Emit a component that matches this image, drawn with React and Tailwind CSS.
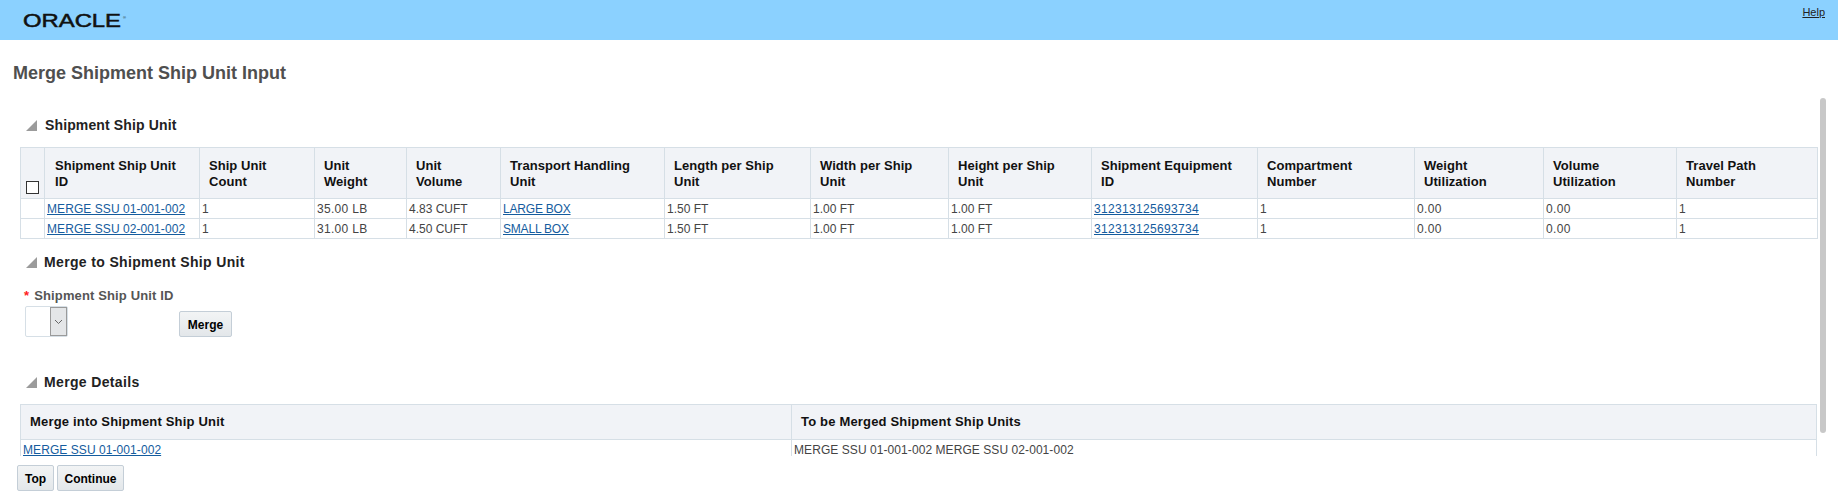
const F = { fontFamily: '"Liberation Sans", Arial, sans-serif' };

function Triangle() {
  return (
    <svg width="11" height="11" viewBox="0 0 11 11" className="shrink-0">
      <polygon points="11,0 11,11 0,11" fill="#9b9b9b" />
    </svg>
  );
}

function Section({ title, className }) {
  return (
    <div className={`flex items-center gap-[7px] pl-[26px] text-[14px] leading-[16px] font-bold text-[#222222] ${className}`}>
      <Triangle />
      <span>{title}</span>
    </div>
  );
}

function Btn({ children, className = "" }) {
  return (
    <button className={`h-[26px] rounded-[2px] border border-[#c4ced7] bg-gradient-to-b from-[#f2f4f5] to-[#e3e7ea] pt-[1px] text-[12px] font-bold text-black ${className}`}>
      {children}
    </button>
  );
}

const cols = [24, 155, 115, 92, 94, 164, 146, 138, 143, 166, 157, 129, 133, 141];
const heads = [
  ["Shipment Ship Unit", "ID"], ["Ship Unit", "Count"], ["Unit", "Weight"], ["Unit", "Volume"], ["Transport Handling", "Unit"],
  ["Length per Ship", "Unit"], ["Width per Ship", "Unit"], ["Height per Ship", "Unit"], ["Shipment Equipment", "ID"],
  ["Compartment", "Number"], ["Weight", "Utilization"], ["Volume", "Utilization"], ["Travel Path", "Number"],
];
const N = "tracking-[0.32px]";
const C = "tracking-[-0.2px]";
const M = "tracking-[0.07px]";
const rows = [
  [["MERGE SSU 01-001-002", M], ["1", N], ["35.00 LB", "tracking-[0.3px]"], ["4.83 CUFT", ""], ["LARGE BOX", C], ["1.50 FT", ""], ["1.00 FT", ""], ["1.00 FT", ""], ["312313125693734", N], ["1", N], ["0.00", N], ["0.00", N], ["1", N]],
  [["MERGE SSU 02-001-002", M], ["1", N], ["31.00 LB", "tracking-[0.3px]"], ["4.50 CUFT", ""], ["SMALL BOX", C], ["1.50 FT", ""], ["1.00 FT", ""], ["1.00 FT", ""], ["312313125693734", N], ["1", N], ["0.00", N], ["0.00", N], ["1", N]],
];
const linkCols = [0, 4, 8];
const link = "text-[#145c9e] underline";

export default function App() {
  return (
    <div className="relative h-[503px] w-[1838px] overflow-hidden bg-white" style={F}>
      <header className="flex h-[40px] items-start justify-between bg-[#8bd1ff] pl-[21px] pr-[13px]">
        <svg width="110" height="22" viewBox="0 0 110 22" className="mt-[12px]">
          <text x="2" y="15" textLength="98" lengthAdjust="spacingAndGlyphs" fontFamily="Liberation Sans" fontSize="18" fill="#111" stroke="#111" strokeWidth="0.5">ORACLE</text>
          <text x="102" y="7" fontFamily="Liberation Sans" fontSize="4" fill="#111">®</text>
        </svg>
        <a className="mt-[5px] text-[11px] leading-[14px] text-[#222] underline">Help</a>
      </header>

      <h1 className="mt-[23px] pl-[13px] text-[18px] leading-[20px] font-bold text-[#4f4f4f]">Merge Shipment Ship Unit Input</h1>

      <main className="h-[373px] overflow-hidden">
        <Section title="Shipment Ship Unit" className="mt-[34px] tracking-[0.13px] [&>span]:ml-[1px]" />
        <table className="mt-[14px] ml-[20px] w-[1797px] table-fixed border-collapse">
          <colgroup>
            {cols.map((w, i) => <col key={i} style={{ width: w }} />)}
          </colgroup>
          <thead>
            <tr className="h-[51px] bg-[#f1f3f7]">
              <th className="border border-[#d6dfe6] pb-[4px] pl-[5px] text-left align-bottom">
                <span className="block h-[13px] w-[13px] border border-[#333] bg-white"></span>
              </th>
              {heads.map((h, i) => (
                <th key={h.join()} className={`border border-[#d6dfe6] pt-[1px] pr-0 text-left align-middle text-[13px] leading-[16px] font-bold tracking-[0.05px] text-[#111] ${i === 0 ? "pl-[10px]" : "pl-[9px]"}`}>
                  {h[0]}<br />{h[1]}
                </th>
              ))}
            </tr>
          </thead>
          <tbody>
            {rows.map((r) => (
              <tr key={r[0][0]} className="h-[20px]">
                <td className="border border-[#d6dfe6]"></td>
                {r.map(([c, t], i) => (
                  <td key={i} className={`border border-[#d6dfe6] px-[2px] text-[12px] leading-[14px] text-[#444] ${t}`}>
                    {linkCols.includes(i) ? <a className={link}>{c}</a> : c}
                  </td>
                ))}
              </tr>
            ))}
          </tbody>
        </table>

        <Section title="Merge to Shipment Ship Unit" className="mt-[15px] tracking-[0.35px]" />
        <div className="mt-[19px] pl-[24px] text-[13px] leading-[14px] font-bold tracking-[0.13px] text-[#555]">
          <span className="mr-[5px] text-[#ff2020]">*</span>Shipment Ship Unit ID
        </div>
        <div className="mt-[3px] flex items-end pl-[25px]">
          <div className="flex h-[31px] w-[43px] rounded-[2px] border border-[#d6dfe6] bg-white">
            <span className="ml-auto flex w-[17px] items-center justify-center border border-[#9a9a9a] bg-[#e4e6e8]">
              <svg width="9" height="6" viewBox="0 0 9 6"><path d="M1 1l3.5 3.5L8 1" fill="none" stroke="#666" strokeWidth="1" /></svg>
            </span>
          </div>
          <Btn className="ml-[111px] w-[53px]">Merge</Btn>
        </div>

        <Section title="Merge Details" className="mt-[37px] tracking-[0.35px]" />
        <table className="mt-[14px] ml-[20px] w-[1797px] table-fixed border-collapse">
          <colgroup>
            <col style={{ width: 771 }} />
            <col />
          </colgroup>
          <thead>
            <tr className="h-[35px] bg-[#f1f3f7]">
              <th className="border border-[#d6dfe6] pl-[9px] text-left text-[13px] font-bold tracking-[0.18px] text-[#111]">Merge into Shipment Ship Unit</th>
              <th className="border border-[#d6dfe6] pl-[9px] text-left text-[13px] font-bold tracking-[0.18px] text-[#111]">To be Merged Shipment Ship Units</th>
            </tr>
          </thead>
          <tbody>
            <tr className="h-[20px]">
              <td className="border border-[#d6dfe6] px-[2px] text-[12px] leading-[14px] tracking-[0.07px] text-[#444]"><a className={link}>MERGE SSU 01-001-002</a></td>
              <td className="border border-[#d6dfe6] px-[2px] text-[12px] leading-[14px] tracking-[0.07px] text-[#444]">MERGE SSU 01-001-002 MERGE SSU 02-001-002</td>
            </tr>
          </tbody>
        </table>
      </main>

      <footer className="mt-[9px] flex gap-[3px] pl-[17px]">
        <Btn className="w-[37px]">Top</Btn>
        <Btn className="w-[67px]">Continue</Btn>
      </footer>

      <div className="absolute top-[98px] left-[1820px] h-[335px] w-[6px] rounded-[3px] bg-[#c8c8c8]"></div>
    </div>
  );
}
